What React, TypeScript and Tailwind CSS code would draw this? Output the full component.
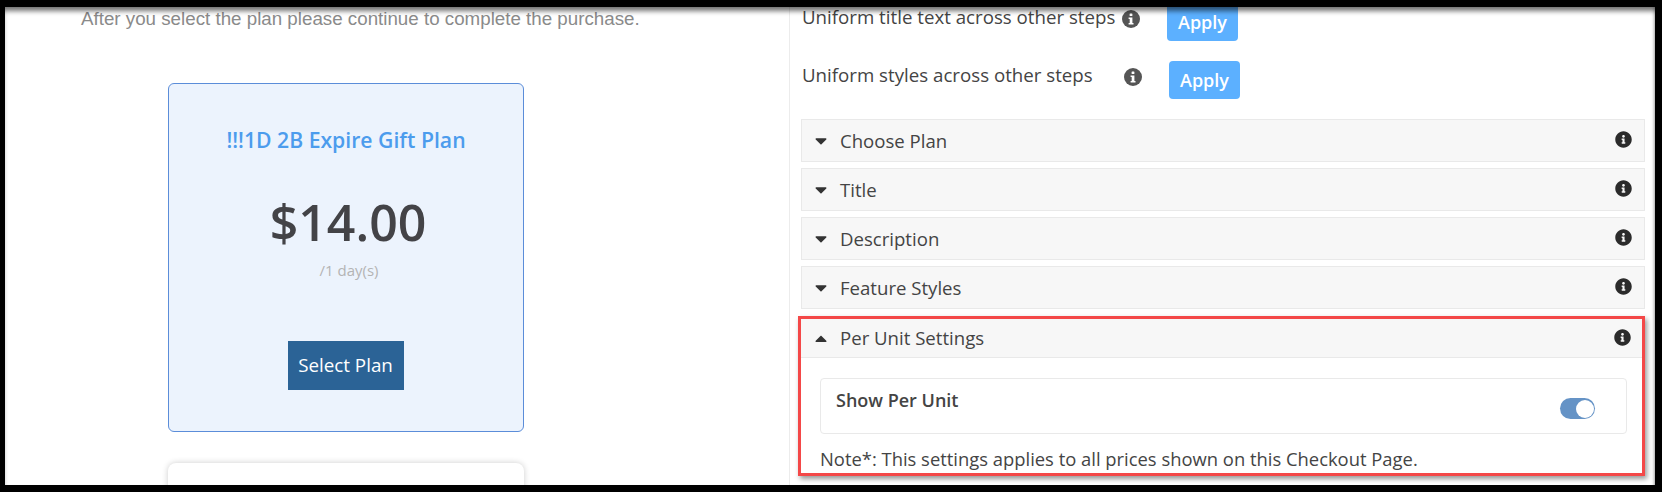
import React from "react";
import { FaCaretDown, FaCaretUp, FaInfoCircle } from "react-icons/fa";

function GrayInfo() {
  return (
    <svg width="18" height="18" viewBox="0 0 18 18" className="shrink-0">
      <circle cx="9" cy="9" r="9" fill="#555555" />
      <rect x="7.6" y="3.4" width="2.8" height="2.6" rx="0.5" fill="#ffffff" />
      <path d="M6.6 7.4h3.8v5.6h1.1v1.5H6.6V13h1.1V8.9H6.6z" fill="#ffffff" />
    </svg>
  );
}

function AccordionRow({ label }: { label: string }) {
  return (
    <div className="flex h-[43px] mb-[6px] items-center border border-[#e9e9e9] bg-[#f7f7f7] pl-[13px] pr-[12px] text-[18.6px] text-[#444444]">
      <FaCaretDown className="h-[19px] w-[12px] text-[#333333]" />
      <span className="ml-[13px] flex-1">{label}</span>
      <FaInfoCircle className="h-[17px] w-[17px] -translate-y-[1px] text-[#2b2b2b]" />
    </div>
  );
}

export default function App() {
  return (
    <div className="h-[492px] w-[1662px] overflow-hidden bg-black pt-[7px] pb-[7px] pl-[5px] pr-[7px] font-['Open_Sans',sans-serif]">
      <div className="relative flex h-[478px] overflow-hidden bg-white">
        <div className="w-[785px] shrink-0 border-r border-[#ececec]">
          <p className="h-[24px] pl-[76px] font-['Liberation_Sans',sans-serif] text-[18.75px] leading-[24px] text-[#8a8a8a]">
            After you select the plan please continue to complete the purchase.
          </p>
          <div className="ml-[163px] mt-[52px] flex h-[349px] w-[356px] flex-col items-center rounded-[6px] border border-[#5b8dd9] bg-[#ecf3fd]">
            <h2 className="mt-[40px] text-[21.2px] font-semibold leading-[32px] text-[#4c9ced]">!!!1D 2B Expire Gift Plan</h2>
            <div className="mt-[34px] pl-[4px] text-[50px] font-semibold leading-[64px] text-[#434347]">$14.00</div>
            <div className="mt-[6px] pl-[6px] text-[15px] leading-[20px] text-[#b4b4b4]">/1 day(s)</div>
            <button className="mt-[61px] h-[49px] w-[116px] bg-[#2b6396] pr-[1px] text-[18.8px] text-white">Select Plan</button>
          </div>
          <div className="ml-[163px] mt-[31px] h-[60px] w-[356px] rounded-[8px] bg-white shadow-[0_0_6px_rgba(0,0,0,0.2)]" />
        </div>

        <div className="-mt-[4px] w-[855px] shrink-0 pl-[11px] text-[18.4px] text-[#444444]">
          <div className="flex h-[38px] items-start">
            <span className="ml-[1px] w-[320px] shrink-0 whitespace-nowrap text-[18.7px] leading-[28px]">Uniform title text across other steps</span>
            <span className="mt-[7px]"><GrayInfo /></span>
            <button className="ml-[27px] h-[38px] w-[71px] rounded-[4px] bg-[#5cb0ff] text-[18px] font-semibold text-white">Apply</button>
          </div>
          <div className="mt-[20px] flex h-[38px] items-start">
            <span className="ml-[1px] w-[322px] shrink-0 whitespace-nowrap text-[18.7px] leading-[28px]">Uniform styles across other steps</span>
            <span className="mt-[7px]"><GrayInfo /></span>
            <button className="ml-[27px] h-[38px] w-[71px] rounded-[4px] bg-[#5cb0ff] text-[18px] font-semibold text-white">Apply</button>
          </div>

          <div className="mt-[20px]">
            <AccordionRow label="Choose Plan" />
            <AccordionRow label="Title" />
            <AccordionRow label="Description" />
            <AccordionRow label="Feature Styles" />
          </div>

          <div className="-ml-[3px] mt-[7px] h-[160px] w-[847px] overflow-hidden border-[3px] border-[#f44848] shadow-[2px_3px_5px_rgba(0,0,0,0.4)]">
            <div className="flex h-[39px] items-center border-b border-[#e9e9e9] bg-[#f7f7f7] pl-[14px] pr-[11px] text-[18.6px]">
              <FaCaretUp className="h-[19px] w-[12px] text-[#333333]" />
              <span className="ml-[13px] flex-1">Per Unit Settings</span>
              <FaInfoCircle className="h-[17px] w-[17px] -translate-y-[1px] text-[#2b2b2b]" />
            </div>
            <div className="pl-[19px] pr-[15px] pt-[20px]">
              <div className="flex h-[56px] justify-between rounded-[4px] border border-[#e9e9e9] pl-[15px] pr-[31px]">
                <span className="mt-[10px] text-[18px] font-semibold leading-[22px]">Show Per Unit</span>
                <div className="mt-[19px] flex h-[21px] w-[35px] items-center justify-end rounded-full bg-[#6593c6] pr-[1px]">
                  <div className="h-[18px] w-[18px] rounded-full bg-white" />
                </div>
              </div>
              <p className="mt-[13px] whitespace-nowrap leading-[24px]">Note*: This settings applies to all prices shown on this Checkout Page.</p>
            </div>
          </div>
        </div>

        <div className="pointer-events-none absolute inset-0 shadow-[inset_0_6px_5px_-2px_rgba(0,0,0,0.55),inset_-3px_0_3px_-2px_rgba(0,0,0,0.25)]" />
      </div>
    </div>
  );
}
